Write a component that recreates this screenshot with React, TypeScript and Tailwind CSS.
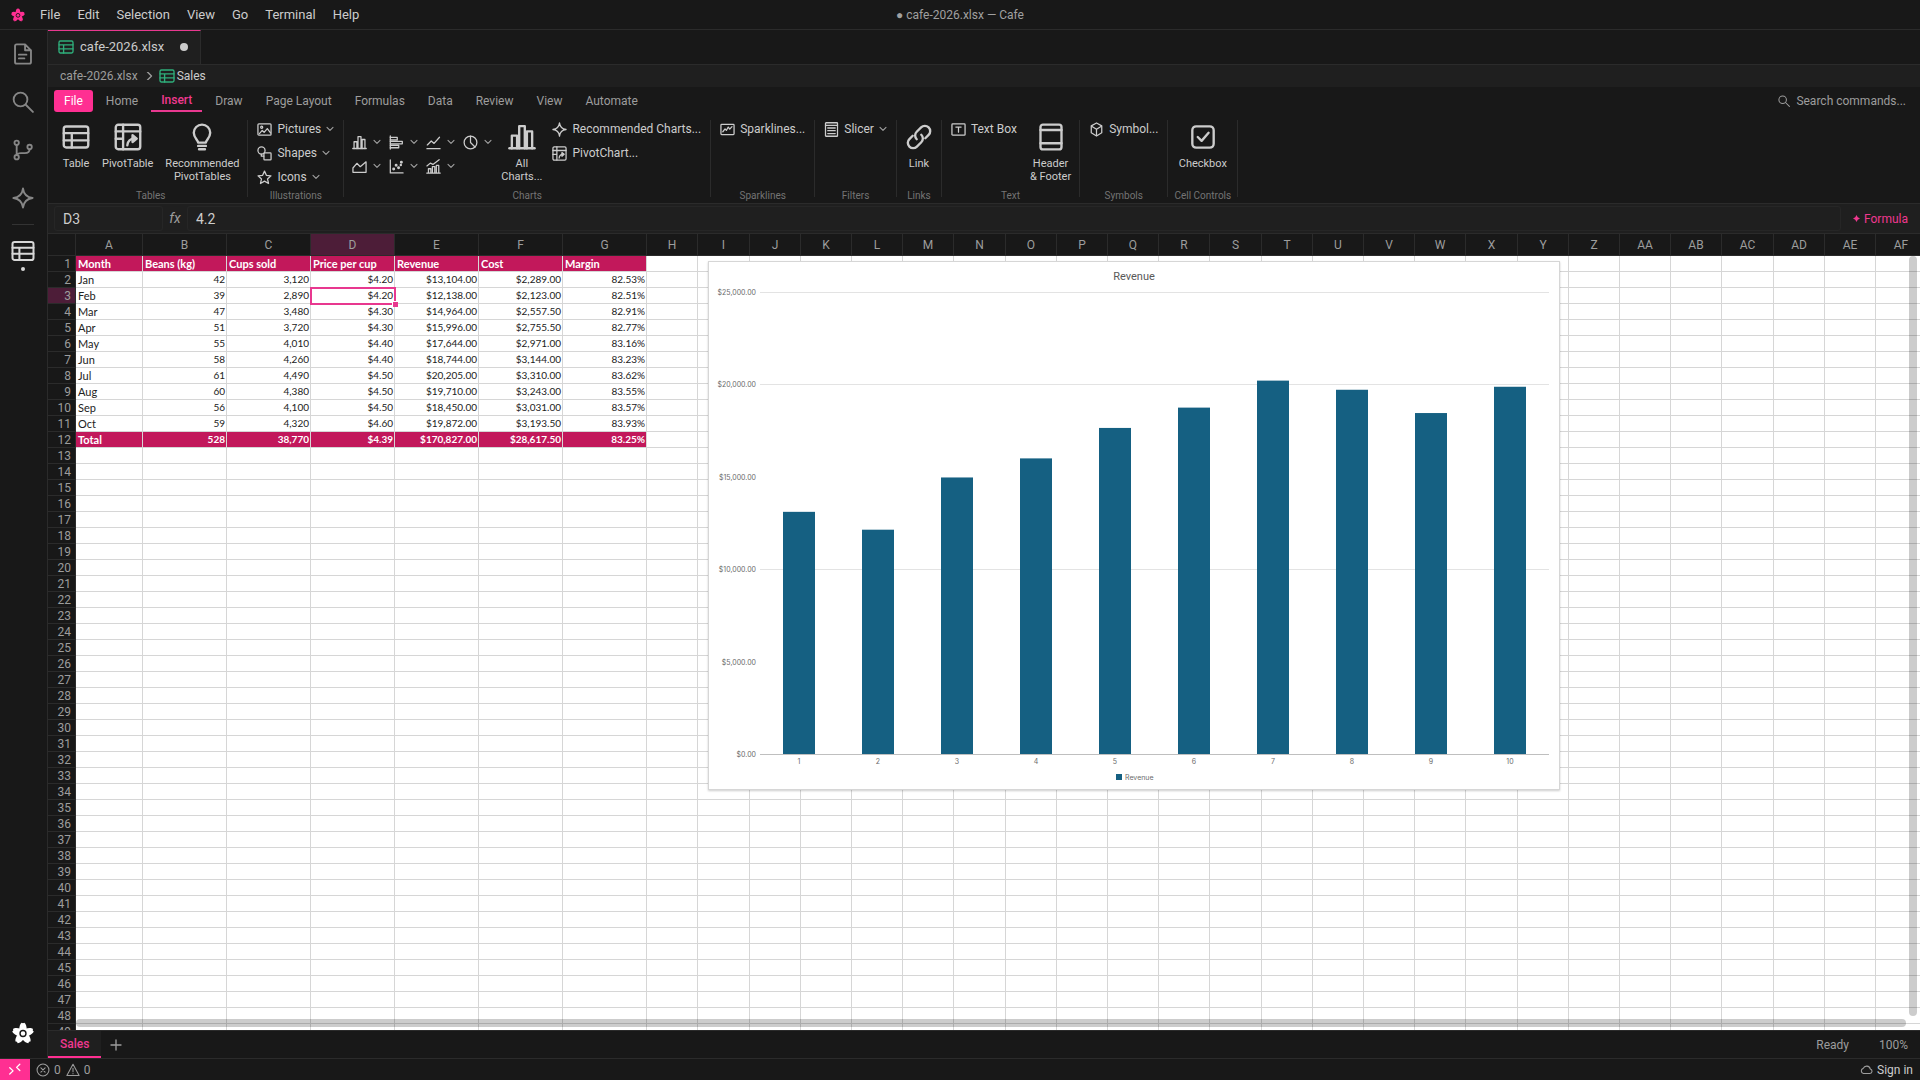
// Workbook view of the Cafe editor: menu bar, activity bar, ribbon (Insert tab),
// formula bar, cell grid with one embedded column chart, sheet tabs, status bar.

import type { ReactNode } from "react";
import clsx from "clsx";

const MENUS = ["File", "Edit", "Selection", "View", "Go", "Terminal", "Help"];
const RIBBON_TABS = [
  "File",
  "Home",
  "Insert",
  "Draw",
  "Page Layout",
  "Formulas",
  "Data",
  "Review",
  "View",
  "Automate",
];

const HEADERS = ["Month", "Beans (kg)", "Cups sold", "Price per cup", "Revenue", "Cost", "Margin"];
const ROWS = [
  ["Jan", "42", "3,120", "$4.20", "$13,104.00", "$2,289.00", "82.53%"],
  ["Feb", "39", "2,890", "$4.20", "$12,138.00", "$2,123.00", "82.51%"],
  ["Mar", "47", "3,480", "$4.30", "$14,964.00", "$2,557.50", "82.91%"],
  ["Apr", "51", "3,720", "$4.30", "$15,996.00", "$2,755.50", "82.77%"],
  ["May", "55", "4,010", "$4.40", "$17,644.00", "$2,971.00", "83.16%"],
  ["Jun", "58", "4,260", "$4.40", "$18,744.00", "$3,144.00", "83.23%"],
  ["Jul", "61", "4,490", "$4.50", "$20,205.00", "$3,310.00", "83.62%"],
  ["Aug", "60", "4,380", "$4.50", "$19,710.00", "$3,243.00", "83.55%"],
  ["Sep", "56", "4,100", "$4.50", "$18,450.00", "$3,031.00", "83.57%"],
  ["Oct", "59", "4,320", "$4.60", "$19,872.00", "$3,193.50", "83.93%"],
];
const TOTAL = ["Total", "528", "38,770", "$4.39", "$170,827.00", "$28,617.50", "83.25%"];
const CELLS = [HEADERS, ...ROWS, TOTAL];

const COL_COUNT = 32;
const ROW_COUNT = 49;
const SELECTED = { row: 2, col: 3 };
const ZOOM = 0.8;

// Unscaled column widths; the edges are rounded so gridlines land on whole pixels.
const RAW_WIDTHS = Array.from({ length: COL_COUNT }, (_, i) => (i === 0 ? 84 : i < 7 ? 105 : 64));
const COL_WIDTHS = (() => {
  let edge = 0;
  return RAW_WIDTHS.map((w) => {
    const left = Math.round(edge * ZOOM);
    edge += w;
    return Math.round(edge * ZOOM) - left;
  });
})();
const GRID_WIDTH = 28 + COL_WIDTHS.reduce((a, b) => a + b, 0);

function colName(i: number): string {
  return i < 26 ? String.fromCharCode(65 + i) : "A" + String.fromCharCode(65 + i - 26);
}

/* ---------- icons ---------- */

function Svg({
  className,
  box = 16,
  stroke = 1.35,
  children,
}: {
  className?: string;
  box?: number;
  stroke?: number;
  children: ReactNode;
}) {
  return (
    <svg
      viewBox={`0 0 ${box} ${box}`}
      className={clsx("shrink-0", className)}
      fill="none"
      stroke="currentColor"
      strokeWidth={stroke}
      strokeLinecap="round"
      strokeLinejoin="round"
      aria-hidden
    >
      {children}
    </svg>
  );
}

function Flower({ className }: { className?: string }) {
  return (
    <svg viewBox="0 0 20 20" className={clsx("shrink-0", className)} aria-hidden>
      {[0, 72, 144, 216, 288].map((a) => (
        <path
          key={a}
          transform={`rotate(${a} 10 10.5)`}
          fill="currentColor"
          d="M10 11 L6.6 7.200 C6.500 4.400 7.400 1.500 8.800 .6 L10 1.200 L11.200 .6 C12.600 1.500 13.500 4.400 13.400 7.200 Z"
        />
      ))}
      <circle cx="10" cy="10.500" r="2.700" fill="none" stroke="#181818" strokeWidth="1.300" />
    </svg>
  );
}

const TableGlyph = () => (
  <>
    <rect x="1" y="2" width="14" height="12" rx="1.4" />
    <path d="M1 5.8h14M1 9.9h14M5.6 5.8V14" />
  </>
);
const PivotGlyph = () => (
  <>
    <rect x="1" y="1" width="14" height="14" rx="1.4" />
    <path d="M1 4.8h14M5.2 1v14M1 9h4.2" />
    <path d="M7.6 12.8c.2-2.6 1.6-3.9 4.6-4" />
    <path d="M10.6 7l2.4 1.9-2.4 2z" fill="currentColor" />
  </>
);
const BulbGlyph = () => (
  <>
    <path d="M5.8 11.2c-.1-1.4-2.5-2.8-2.5-5.6a4.7 4.7 0 0 1 9.4 0c0 2.8-2.4 4.2-2.5 5.6z" />
    <path d="M5.8 13.1h4.4M6.3 15h3.4" />
  </>
);
const PictureGlyph = () => (
  <>
    <rect x="1" y="2" width="14" height="12" rx="1" />
    <circle cx="5" cy="5.6" r="1.1" />
    <path d="M2.6 12.4l3-3.4 2 2 3.4-4 3.4 4.6" />
  </>
);
const ShapesGlyph = () => (
  <>
    <circle cx="4.8" cy="4.8" r="3.8" />
    <rect x="7.4" y="7.4" width="7.6" height="7.4" rx="0.8" />
    <path d="M4.6 8.6v2.2h2.6" />
  </>
);
const StarGlyph = () => (
  <path d="M8 1.2l2 4.5 4.9.5-3.7 3.3 1.1 4.9L8 11.9l-4.3 2.5 1.1-4.9L1.1 6.2l4.9-.5z" />
);
const ColumnsGlyph = () => (
  <>
    <path d="M.8 14.4h14.4" />
    <path d="M2.2 14.4V7.2h3v7.2M6.4 14.4V1.8h3.2v12.6M10.8 14.4V4.8h3v9.6" />
  </>
);
const BarsGlyph = () => (
  <>
    <path d="M1.4 1v14" />
    <path d="M1.4 2.6h7.4v2.6H1.4M1.4 6.8h12.8v2.6H1.4M1.4 11h9v2.6h-9" />
  </>
);
const LineGlyph = () => (
  <>
    <path d="M1 14.6h14" />
    <path d="M1.4 10.6l4.2-4.2 3 2.6 5.8-6.6" />
  </>
);
const PieGlyph = () => (
  <>
    <circle cx="8" cy="8" r="6.8" />
    <path d="M8 1.2V8l4.8 4.8" />
  </>
);
const AreaGlyph = () => <path d="M1 14.2V9.6l4.2-5 3.6 3.6L15 3v11.2z" />;
const ScatterGlyph = () => (
  <>
    <path d="M1.4 1v13.8H15" />
    <g fill="currentColor">
      <circle cx="5" cy="10.6" r="0.9" />
      <circle cx="7.6" cy="6.6" r="0.9" />
      <circle cx="10.2" cy="9.4" r="0.9" />
      <circle cx="13.2" cy="3.4" r="0.9" />
      <circle cx="12.6" cy="6.4" r="0.6" />
    </g>
  </>
);
const ComboGlyph = () => (
  <>
    <path d="M.8 15h14.4M2.6 15v-4.6h2.6V15M6.8 15V8.2h2.6V15M11 15V6.8h2.6V15" />
    <path d="M1 7.4l3.6-3 2.8 1.4 6.6-5" />
  </>
);
const SparkleGlyph = () => (
  <path d="M8 1c.5 4.2 2.6 6.5 7 7-4.4.5-6.500 2.800-7 7-.5-4.200-2.600-6.500-7-7 4.400-.5 6.500-2.800 7-7z" />
);
const SparklineGlyph = () => (
  <>
    <rect x="1" y="2.600" width="14" height="10.800" rx="0.800" />
    <path d="M3 10.400l2.400-3 1.400 1.600 2-3.600 1.600 2.200 2.400-2.600" />
  </>
);
const SlicerGlyph = () => (
  <>
    <rect x="1.600" y="0.800" width="12.800" height="14.400" rx="0.600" />
    <path d="M1.600 3.600h12.800M4 6.400h8M4 9.300h8M4 12.300h8" />
  </>
);
const LinkGlyph = () => (
  <>
    <path d="M6.700 9.300a3 3 0 0 1 0-4.300l2.500-2.500a3 3 0 0 1 4.300 4.300l-1.900 1.900" />
    <path d="M9.300 6.700a3 3 0 0 1 0 4.300l-2.500 2.500a3 3 0 0 1-4.300-4.300l1.900-1.900" />
  </>
);
const TextBoxGlyph = () => (
  <>
    <rect x="1" y="2" width="14" height="12" rx="0.800" />
    <path d="M5.200 5.400h5.600M8 5.400v5.400" />
  </>
);
const HeaderGlyph = () => (
  <>
    <rect x="2" y="0.900" width="12" height="14.200" rx="1.400" />
    <path d="M2 4h12M2 11.600h12" />
  </>
);
const SymbolGlyph = () => (
  <>
    <path d="M8 1l5.600 3.100v7.400L8 15l-5.600-3.500V4.100z" />
    <path d="M2.800 4.600L8 7.800l5.200-3.200M8 7.800V14" />
  </>
);
const CheckGlyph = () => (
  <>
    <rect x="1.900" y="1.900" width="12.200" height="12.200" rx="2.200" />
    <path d="M5 8l2.200 2.200 4-4.600" />
  </>
);

const Chevron = () => (
  <Svg className="size-2 text-[#a0a0a0]" box={8} stroke={1.1}>
    <path d="M1 2.400l3 3 3-3" />
  </Svg>
);

/* ---------- chrome ---------- */

function MenuBar() {
  return (
    <header className="relative flex h-[30px] shrink-0 items-center border-b border-[#2b2b2b] pl-[11px]">
      <Flower className="mr-[7px] size-[14px] text-[#ff2f92]" />
      <nav className="flex gap-px">
        {MENUS.map((m) => (
          <button key={m} type="button" className="px-2 text-[13px] text-[#cccccc]">
            {m}
          </button>
        ))}
      </nav>
      <div className="pointer-events-none absolute inset-x-0 text-center text-[12px] text-[#a0a0a0]">
        ● cafe-2026.xlsx — Cafe
      </div>
    </header>
  );
}

function ActivityBar() {
  return (
    <aside className="flex w-12 shrink-0 flex-col items-center border-r border-[#2b2b2b] pr-0.5 text-[#868686]">
      <button type="button" aria-label="Explorer" className="grid h-12 place-items-center">
        <Svg className="size-[22px]">
          <path d="M3.400 1h6.100l4.300 4.300v8.500c0 .7-.5 1.200-1.200 1.200H3.400c-.7 0-1.200-.5-1.200-1.200V2.200C2.200 1.500 2.700 1 3.400 1zM9.500 1v4.300h4.300M5 8.500h5.500M5 11.200h4" />
        </Svg>
      </button>
      <button type="button" aria-label="Search" className="grid h-12 place-items-center">
        <Svg className="size-[22px]">
          <circle cx="6.200" cy="6.200" r="5" />
          <path d="M10 10l5.200 5.200" />
        </Svg>
      </button>
      <button type="button" aria-label="Source control" className="grid h-12 place-items-center">
        <Svg className="size-[22px]">
          <circle cx="3.400" cy="2.800" r="1.600" />
          <circle cx="3.400" cy="13.200" r="1.600" />
          <circle cx="12.800" cy="5.800" r="1.600" />
          <path d="M3.400 4.500v7M12.800 7.500c0 2-1 2.800-3.500 2.800H6.500c-1.600 0-2.700.4-3.100 1.400" />
        </Svg>
      </button>
      <button type="button" aria-label="Assistant" className="grid h-12 place-items-center">
        <Svg className="size-[22px]">
          <SparkleGlyph />
        </Svg>
      </button>
      <div className="my-[2px] h-px w-[22px] bg-[#333333]" />
      <button
        type="button"
        aria-label="Workbook"
        className="relative grid h-12 place-items-center text-[#d7d7d7]"
      >
        <Svg className="size-[24px]">
          <TableGlyph />
        </Svg>
        <span className="absolute bottom-1 left-1/2 size-1 -translate-x-1/2 rounded-full bg-[#d7d7d7]" />
      </button>
      <button type="button" aria-label="Cafe" className="mt-auto mb-3.5 text-white">
        <Flower className="size-[22px]" />
      </button>
    </aside>
  );
}

function TabStrip() {
  return (
    <div className="flex h-[35px] shrink-0 border-b border-[#2b2b2b]">
      <button
        type="button"
        className="flex items-center border-t border-r border-t-[#e8388f] border-r-[#2b2b2b] bg-[#1f1f1f] pr-3 pb-px pl-[10px] text-[13px] text-[#cccccc]"
      >
        <Svg className="mr-1.5 size-4 text-[#2fae7b]">
          <TableGlyph />
        </Svg>
        cafe-2026.xlsx
        <span className="ml-4 size-2 rounded-full bg-[#cccccc]" />
      </button>
    </div>
  );
}

function Breadcrumbs() {
  return (
    <div className="flex h-[22px] shrink-0 items-center bg-[#1f1f1f] px-3 text-[12px] text-[#9d9d9d]">
      cafe-2026.xlsx
      <Svg className="mr-1.5 ml-[7px] size-2" box={8}>
        <path d="M2.500 0l4 4-4 4" />
      </Svg>
      <Svg className="mr-[2px] size-4 text-[#2fae7b]">
        <TableGlyph />
      </Svg>
      <span className="text-[#cccccc]">Sales</span>
    </div>
  );
}

/* ---------- ribbon ---------- */

function Group({
  label,
  tight,
  children,
}: {
  label: string;
  /** Nearly no gap between the group's controls. */
  tight?: boolean;
  children: ReactNode;
}) {
  return (
    <section className="relative flex flex-col pr-[5px] pb-0.5 pl-1 after:absolute after:top-[3px] after:right-0 after:bottom-[6px] after:w-px after:bg-[#2b2b2b]">
      <div className={clsx("flex h-[74px]", tight ? "gap-px" : "gap-1")}>{children}</div>
      <div className="px-0.5 text-center text-[10px] leading-[10px] whitespace-nowrap text-[#747474]">
        {label}
      </div>
    </section>
  );
}

function BigButton({ lines, icon }: { lines: string[]; icon: ReactNode }) {
  return (
    <button type="button" className="flex flex-col items-center px-1 pt-1.5 text-[11px] leading-[13px]">
      <Svg className="mb-1.5 size-7">{icon}</Svg>
      {lines.map((l) => (
        <span key={l} className="whitespace-nowrap">
          {l}
        </span>
      ))}
    </button>
  );
}

function SmallButton({ label, icon, menu }: { label: string; icon: ReactNode; menu?: boolean }) {
  return (
    <button
      type="button"
      className="flex h-6 items-center gap-[5px] px-[5px] text-[12px] whitespace-nowrap"
    >
      <Svg className="size-[15px]">{icon}</Svg>
      {label}
      {menu && <Chevron />}
    </button>
  );
}

const CHART_KINDS: [string, ReactNode][] = [
  ["Column chart", <ColumnsGlyph />],
  ["Bar chart", <BarsGlyph />],
  ["Line chart", <LineGlyph />],
  ["Pie chart", <PieGlyph />],
  ["Area chart", <AreaGlyph />],
  ["Scatter chart", <ScatterGlyph />],
  ["Combo chart", <ComboGlyph />],
];

function Ribbon() {
  return (
    <div className="flex shrink-0 flex-col border-b border-[#2b2b2b]">
      <div className="flex h-[27px] items-center gap-[3px] pr-[14px] pl-1.5 text-[12px] text-[#9d9d9d]">
        {RIBBON_TABS.map((t) => (
          <button
            key={t}
            type="button"
            className={clsx(
              "h-[22px] px-[10px] whitespace-nowrap",
              t === "File" && "rounded-[3px] bg-[#ff2f92] text-white",
              t === "Insert" && "mt-px border-b-2 border-[#e8388f] leading-[18px] font-medium text-[#f0388f]",
            )}
          >
            {t}
          </button>
        ))}
        <button type="button" className="ml-auto flex items-center gap-1.5">
          <Svg className="size-3">
            <circle cx="6.200" cy="6.200" r="5" />
            <path d="M10 10l5.200 5.200" />
          </Svg>
          Search commands...
        </button>
      </div>
      <div className="flex pt-[3px] pl-1.5 text-[#cccccc]">
        <Group label="Tables">
          <BigButton lines={["Table"]} icon={<TableGlyph />} />
          <BigButton lines={["PivotTable"]} icon={<PivotGlyph />} />
          <BigButton lines={["Recommended", "PivotTables"]} icon={<BulbGlyph />} />
        </Group>
        <Group label="Illustrations">
          <div className="flex flex-col items-start">
            <SmallButton label="Pictures" icon={<PictureGlyph />} menu />
            <SmallButton label="Shapes" icon={<ShapesGlyph />} menu />
            <SmallButton label="Icons" icon={<StarGlyph />} menu />
          </div>
        </Group>
        <Group label="Charts" tight>
          <div className="grid grid-cols-4 content-center">
            {CHART_KINDS.map(([name, icon]) => (
              <button
                key={name}
                type="button"
                aria-label={name}
                className="flex h-6 items-center gap-[6px] px-1"
              >
                <Svg className="size-[15px]">{icon}</Svg>
                <Chevron />
              </button>
            ))}
          </div>
          <BigButton lines={["All", "Charts..."]} icon={<ColumnsGlyph />} />
          <div className="flex flex-col items-start">
            <SmallButton label="Recommended Charts..." icon={<SparkleGlyph />} />
            <SmallButton label="PivotChart..." icon={<PivotGlyph />} />
          </div>
        </Group>
        <Group label="Sparklines">
          <SmallButton label="Sparklines..." icon={<SparklineGlyph />} />
        </Group>
        <Group label="Filters">
          <SmallButton label="Slicer" icon={<SlicerGlyph />} menu />
        </Group>
        <Group label="Links">
          <BigButton lines={["Link"]} icon={<LinkGlyph />} />
        </Group>
        <Group label="Text">
          <SmallButton label="Text Box" icon={<TextBoxGlyph />} />
          <BigButton lines={["Header", "& Footer"]} icon={<HeaderGlyph />} />
        </Group>
        <Group label="Symbols">
          <SmallButton label="Symbol..." icon={<SymbolGlyph />} />
        </Group>
        <Group label="Cell Controls">
          <div className="flex flex-1 justify-center">
            <BigButton lines={["Checkbox"]} icon={<CheckGlyph />} />
          </div>
        </Group>
      </div>
    </div>
  );
}

function FormulaBar() {
  return (
    <div className="flex h-[30px] shrink-0 items-center border-b border-[#2b2b2b] bg-[#1f1f1f] px-1.5 text-[14px] text-[#cccccc]">
      <input
        aria-label="Name box"
        defaultValue="D3"
        className="h-[25px] w-[109px] rounded-[3px] border border-[#262626] bg-transparent px-2 outline-none"
      />
      <span className="w-6 text-center text-[#9d9d9d] italic">fx</span>
      <input
        aria-label="Formula"
        defaultValue="4.2"
        className="h-[25px] min-w-0 flex-1 rounded-[3px] border border-[#262626] bg-transparent px-2 outline-none"
      />
      <button type="button" className="mr-1.5 ml-3 flex items-center gap-1 text-[12px] text-[#f0388f]">
        <svg viewBox="0 0 8 8" className="size-[7px]" fill="currentColor" aria-hidden>
          <path d="M4 0l1.400 2.600L8 4 5.400 5.400 4 8 2.600 5.400 0 4l2.600-1.400z" />
        </svg>
        Formula
      </button>
    </div>
  );
}

/* ---------- grid ---------- */

function Grid() {
  return (
    <table
      className="table-fixed border-separate border-spacing-0"
      style={{ width: GRID_WIDTH }}
    >
      <colgroup>
        <col className="w-7" />
        {COL_WIDTHS.map((w, i) => (
          <col key={i} style={{ width: w }} />
        ))}
      </colgroup>
      <thead>
        <tr className="h-[22px] bg-[#181818] text-[12px] leading-[20px] text-[#9d9d9d]">
          <th className="border-r border-b border-[#2b2b2b] p-0" />
          {COL_WIDTHS.map((_, i) => (
            <th
              key={i}
              scope="col"
              className={clsx(
                "border-r border-b border-[#2b2b2b] p-0 pt-px font-normal",
                i === SELECTED.col && "bg-[#4d1d38]",
              )}
            >
              {colName(i)}
            </th>
          ))}
        </tr>
      </thead>
      <tbody className="text-[#222222]">
        {Array.from({ length: ROW_COUNT }, (_, r) => {
          const banded = r === 0 || r === CELLS.length - 1;
          return (
            <tr key={r} className="h-4 leading-[15px]">
              <th
                scope="row"
                className={clsx(
                  "border-r border-b border-[#2b2b2b] p-0 pt-px pr-1 text-right text-[12px] leading-[14px] font-normal text-[#9d9d9d]",
                  r === SELECTED.row ? "bg-[#4d1d38]" : "bg-[#181818]",
                )}
              >
                {r + 1}
              </th>
              {COL_WIDTHS.map((_, c) => (
                <td
                  key={c}
                  className={clsx(
                    "border-r border-b border-[#d6d6d6] p-0 font-[Lato,sans-serif] whitespace-nowrap",
                    c === 0 || r === 0 ? "pl-[2px] text-left text-[11px]" : "pr-px text-right text-[10px]",
                    banded && c < 7 ? "bg-[#c2185b] font-bold text-white" : "bg-white",
                    r === SELECTED.row && c === SELECTED.col && "relative",
                  )}
                >
                  {CELLS[r]?.[c]}
                  {r === SELECTED.row && c === SELECTED.col && (
                    <>
                      <span className="absolute -top-px -right-[2px] -bottom-[2px] -left-px border-2 border-[#e8388f]" />
                      <span className="absolute -right-1 -bottom-1 size-[6px] border-t border-l border-white bg-[#e8388f]" />
                    </>
                  )}
                </td>
              ))}
            </tr>
          );
        })}
      </tbody>
    </table>
  );
}

const PLOT = { left: 51, right: 840, top: 30, bottom: 492 };
const REVENUE = ROWS.map((r) => Number(r[4].replace(/[$,]/g, "")));
const yOf = (v: number) => PLOT.bottom - (v / 25000) * (PLOT.bottom - PLOT.top);

function RevenueChart() {
  const step = (PLOT.right - PLOT.left) / REVENUE.length;
  return (
    <figure className="absolute top-[27px] left-[660px] border border-[#d6d6d6] bg-white shadow-[0_1px_2px_rgba(0,0,0,0.2)]">
      <svg viewBox="0 0 850 527" width="850" height="527" className="block font-[Inter,sans-serif]">
        <text x="425" y="18" textAnchor="middle" className="fill-[#595959] font-[Roboto,sans-serif] text-[11px]">
          Revenue
        </text>
        {[25000, 20000, 10000].map((v) => (
          <path key={v} d={`M${PLOT.left} ${Math.round(yOf(v)) + 0.5}H${PLOT.right}`} stroke="#e3e3e3" />
        ))}
        {[25000, 20000, 15000, 10000, 5000, 0].map((v) => (
          <text
            key={v}
            x={47}
            y={Math.round(yOf(v)) + 3}
            textAnchor="end"
            className="fill-[#6b6b6b] text-[7px]"
          >
            ${v.toLocaleString("en-US")}.00
          </text>
        ))}
        {REVENUE.map((v, i) => {
          const x = Math.round(PLOT.left + step * (i + 0.5) - 16);
          return (
            <g key={i}>
              <rect x={x} y={yOf(v)} width="32" height={PLOT.bottom - yOf(v)} fill="#156082" />
              <text x={x + 16} y="502" textAnchor="middle" className="fill-[#6b6b6b] text-[7px]">
                {i + 1}
              </text>
            </g>
          );
        })}
        <path d={`M${PLOT.left} ${PLOT.bottom}.5H${PLOT.right}`} stroke="#bfbfbf" />
        <rect x="407" y="512" width="6" height="6" fill="#156082" />
        <text x="416" y="518" className="fill-[#6b6b6b] text-[7px]">
          Revenue
        </text>
      </svg>
    </figure>
  );
}

function SheetTabs() {
  return (
    <div className="flex h-7 shrink-0 items-stretch border-t border-[#2b2b2b] text-[12px] text-[#9d9d9d]">
      <button
        type="button"
        className="border-b-2 border-[#ff2f92] bg-[#1f1f1f] px-3 font-medium text-[#f0388f]"
      >
        Sales
      </button>
      <button type="button" aria-label="Add sheet" className="px-[9px]">
        <Svg className="size-3" box={12}>
          <path d="M6 1v10M1 6h10" />
        </Svg>
      </button>
      <span className="ml-auto self-center">Ready</span>
      <span className="mr-3 ml-[30px] self-center">100%</span>
    </div>
  );
}

function StatusBar() {
  return (
    <footer className="flex h-[22px] shrink-0 items-center border-t border-[#2b2b2b] text-[12px] text-[#9d9d9d]">
      <button
        type="button"
        aria-label="Remote"
        className="grid h-full w-[30px] place-items-center bg-[#ff2f92] text-white"
      >
        <Svg className="size-[14px]" stroke={1.5}>
          <path d="M2 5.500l3.800 3.500L2 12.500M13.500 1.500L9.800 5l3.700 3.500" />
        </Svg>
      </button>
      <button type="button" className="ml-1.5 flex items-center gap-1">
        <Svg className="size-[14px]" stroke={1.2}>
          <circle cx="8" cy="8" r="6.800" />
          <path d="M5.600 5.600l4.800 4.800M10.400 5.600l-4.800 4.800" />
        </Svg>
        0
        <Svg className="ml-px size-[14px]" stroke={1.2}>
          <path d="M8 1.500L15 14.300H1zM8 6v4M8 12v.3" />
        </Svg>
        0
      </button>
      <button type="button" className="mr-[7px] ml-auto flex items-center gap-1 text-[#cccccc]">
        <Svg className="size-[13px] text-[#9d9d9d]">
          <path d="M4.200 13h8a2.800 2.800 0 0 0 .5-5.500A4.600 4.600 0 0 0 4 6.600 3.300 3.300 0 0 0 4.200 13z" />
        </Svg>
        Sign in
      </button>
    </footer>
  );
}

export default function App() {
  return (
    <div className="flex h-screen flex-col overflow-hidden bg-[#181818] font-[Roboto,'Noto_Sans',sans-serif]">
      <MenuBar />
      <div className="flex min-h-0 flex-1">
        <ActivityBar />
        <main className="flex min-w-0 flex-1 flex-col">
          <TabStrip />
          <Breadcrumbs />
          <Ribbon />
          <FormulaBar />
          <div className="relative min-h-0 flex-1 overflow-hidden bg-white">
            <Grid />
            <RevenueChart />
            <div className="absolute top-[22px] right-[3px] bottom-[14px] w-2 rounded bg-black/20" />
            <div className="absolute right-[14px] bottom-[3px] left-7 h-2 rounded bg-black/20" />
          </div>
          <SheetTabs />
        </main>
      </div>
      <StatusBar />
    </div>
  );
}
